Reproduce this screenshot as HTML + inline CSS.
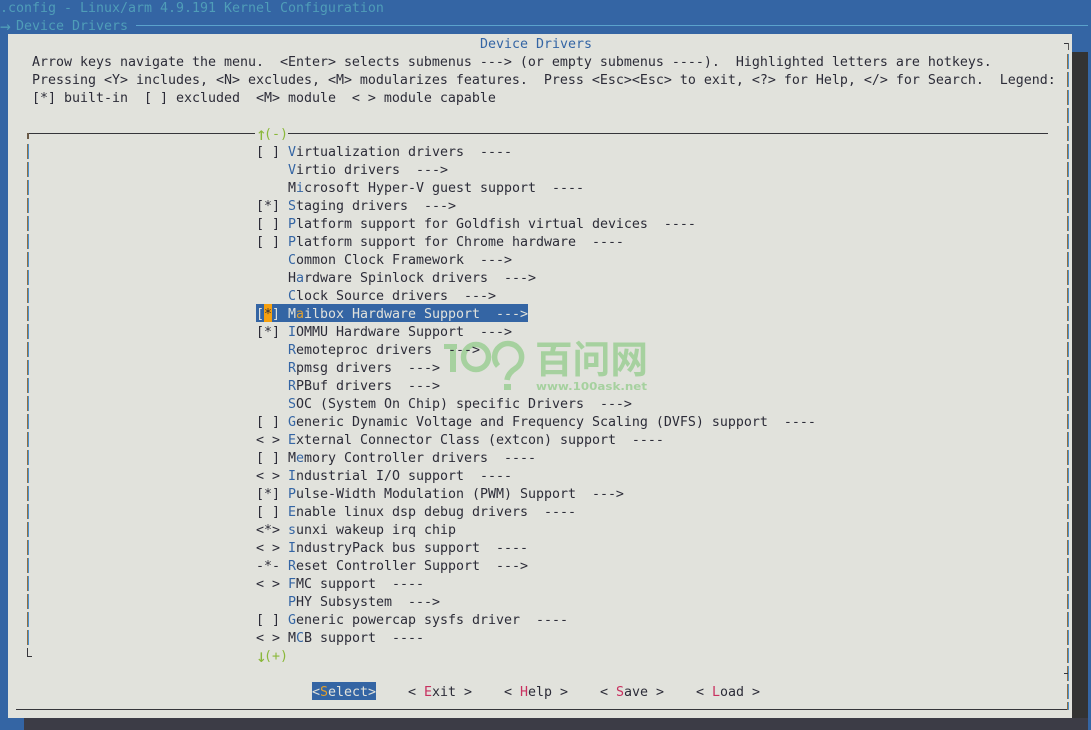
<!DOCTYPE html>
<html><head><meta charset="utf-8"><style>
html,body{margin:0;padding:0;background:#3465a4;width:1091px;height:730px;overflow:hidden}
.a{position:absolute}
.r{position:absolute;white-space:pre;font-family:"DejaVu Sans Mono","Liberation Mono",monospace;font-size:13.3px;letter-spacing:-0.007px;line-height:18px;height:18px;color:#2c2c38;transform:translateY(2px)}
.r i{font-style:normal;color:#3465a4}
.t{color:#4f9db8}
.w{display:inline-block;width:8px;font-size:18px;line-height:18px;text-align:center;vertical-align:top}
.v{position:absolute;width:2px;background:linear-gradient(to right,#8f6f45 50%,#4a90cc 50%);-webkit-mask-image:repeating-linear-gradient(to bottom,#000 0 15px,transparent 15px 18px);mask-image:repeating-linear-gradient(to bottom,#000 0 15px,transparent 15px 18px)}
.h{position:absolute;height:1px;background:#35353a}
.b i{color:#c8305f}
</style></head><body>
<div class="a" style="left:1072px;top:52px;width:16px;height:666px;background:#333"></div>
<div class="a" style="left:24px;top:718px;width:1064px;height:12px;background:#3c3c46"></div>
<div class="a" style="left:8px;top:34px;width:1064px;height:684px;background:#e1e2dc"></div>

<div class="r t" style="left:0;top:-2px">.config - Linux/arm 4.9.191 Kernel Configuration</div>
<div class="r t" style="left:0;top:16px"><span class="w">→</span> Device Drivers</div>
<div class="a" style="left:136px;top:25px;width:952px;height:1px;background:#5aa2cc"></div>

<div class="r" style="left:480px;top:34px;color:#3465a4">Device Drivers</div>
<div class="r" style="left:32px;top:52px">Arrow keys navigate the menu.  &lt;Enter&gt; selects submenus ---&gt; (or empty submenus ----).  Highlighted letters are hotkeys.</div>
<div class="r" style="left:32px;top:70px">Pressing &lt;Y&gt; includes, &lt;N&gt; excludes, &lt;M&gt; modularizes features.  Press &lt;Esc&gt;&lt;Esc&gt; to exit, &lt;?&gt; for Help, &lt;/&gt; for Search.  Legend:</div>
<div class="r" style="left:32px;top:88px">[*] built-in  [ ] excluded  &lt;M&gt; module  &lt; &gt; module capable</div>

<!-- watermark -->
<svg class="a" style="left:440px;top:335px" width="215" height="60" viewBox="0 0 215 60">
<g fill="#a6d19f">
<rect x="4" y="9" width="13" height="5"/><rect x="10" y="9" width="6" height="28"/>
<circle cx="36" cy="22" r="12.5" fill="none" stroke="#a6d19f" stroke-width="5.5"/>
<path d="M58 31 A13.5 13.5 0 1 1 76 33 Q68 38 67 45" fill="none" stroke="#a6d19f" stroke-width="5.5"/>
<rect x="64" y="49" width="7" height="6"/>
<text x="95" y="38" font-family="'Noto Sans CJK SC','WenQuanYi Zen Hei',sans-serif" font-size="38" font-weight="700" textLength="113" lengthAdjust="spacingAndGlyphs">百问网</text>
<text x="96" y="55" font-family="'DejaVu Sans',sans-serif" font-size="11" font-weight="700" textLength="111" lengthAdjust="spacingAndGlyphs">www.100ask.net</text>
</g></svg>

<!-- frame -->
<div class="h" style="left:28px;top:133px;width:227px"></div>
<div class="h" style="left:288px;top:133px;width:760px"></div>
<div class="a" style="left:27px;top:133px;width:2px;height:6px;background:#6a5a48"></div>
<div class="v" style="left:27px;top:144px;height:504px"></div>
<div class="a" style="left:27px;top:648px;width:1px;height:8px;background:#35353a"></div>
<div class="h" style="left:27px;top:656px;width:5px"></div>
<div class="h" style="left:16px;top:709px;width:1053px"></div>
<div class="h" style="left:1064px;top:43px;width:5px"></div>
<div class="a" style="left:1068px;top:43px;width:1px;height:7px;background:#555"></div>
<div class="v" style="left:1067px;top:54px;height:656px"></div>
<div class="h" style="left:1064px;top:673px;width:4px"></div>

<div class="r" style="left:256px;top:124px;color:#8ab83a"><span class="w">↑</span>(-)</div>
<div class="r" style="left:256px;top:646px;color:#8ab83a"><span class="w">↓</span>(+)</div>

<div class="r" style="left:256px;top:142px">[ ] <i>V</i>irtualization drivers  ----</div>
<div class="r" style="left:256px;top:160px">    <i>V</i>irtio drivers  ---&gt;</div>
<div class="r" style="left:256px;top:178px">    M<i>i</i>crosoft Hyper-V guest support  ----</div>
<div class="r" style="left:256px;top:196px">[*] <i>S</i>taging drivers  ---&gt;</div>
<div class="r" style="left:256px;top:214px">[ ] <i>P</i>latform support for Goldfish virtual devices  ----</div>
<div class="r" style="left:256px;top:232px">[ ] <i>P</i>latform support for Chrome hardware  ----</div>
<div class="r" style="left:256px;top:250px">    <i>C</i>ommon Clock Framework  ---&gt;</div>
<div class="r" style="left:256px;top:268px">    H<i>a</i>rdware Spinlock drivers  ---&gt;</div>
<div class="r" style="left:256px;top:286px">    <i>C</i>lock Source drivers  ---&gt;</div>

<div class="a" style="left:256px;top:304px;width:272px;height:18px;background:#3465a4"></div>
<div class="a" style="left:264px;top:304px;width:8px;height:18px;background:#f5a00f"></div>
<div class="r" style="left:256px;top:304px;color:#e1e2dc">[<span style="color:#2c2c38">*</span>] M<span style="color:#e0a030">a</span>ilbox Hardware Support  ---&gt;</div>

<div class="r" style="left:256px;top:322px">[*] <i>I</i>OMMU Hardware Support  ---&gt;</div>
<div class="r" style="left:256px;top:340px">    <i>R</i>emoteproc drivers  ---&gt;</div>
<div class="r" style="left:256px;top:358px">    <i>R</i>pmsg drivers  ---&gt;</div>
<div class="r" style="left:256px;top:376px">    <i>R</i>PBuf drivers  ---&gt;</div>
<div class="r" style="left:256px;top:394px">    <i>S</i>OC (System On Chip) specific Drivers  ---&gt;</div>
<div class="r" style="left:256px;top:412px">[ ] <i>G</i>eneric Dynamic Voltage and Frequency Scaling (DVFS) support  ----</div>
<div class="r" style="left:256px;top:430px">&lt; &gt; <i>E</i>xternal Connector Class (extcon) support  ----</div>
<div class="r" style="left:256px;top:448px">[ ] M<i>e</i>mory Controller drivers  ----</div>
<div class="r" style="left:256px;top:466px">&lt; &gt; <i>I</i>ndustrial I/O support  ----</div>
<div class="r" style="left:256px;top:484px">[*] <i>P</i>ulse-Width Modulation (PWM) Support  ---&gt;</div>
<div class="r" style="left:256px;top:502px">[ ] <i>E</i>nable linux dsp debug drivers  ----</div>
<div class="r" style="left:256px;top:520px">&lt;*&gt; <i>s</i>unxi wakeup irq chip</div>
<div class="r" style="left:256px;top:538px">&lt; &gt; <i>I</i>ndustryPack bus support  ----</div>
<div class="r" style="left:256px;top:556px">-*- <i>R</i>eset Controller Support  ---&gt;</div>
<div class="r" style="left:256px;top:574px">&lt; &gt; <i>F</i>MC support  ----</div>
<div class="r" style="left:256px;top:592px">    <i>P</i>HY Subsystem  ---&gt;</div>
<div class="r" style="left:256px;top:610px">[ ] <i>G</i>eneric powercap sysfs driver  ----</div>
<div class="r" style="left:256px;top:628px">&lt; &gt; M<i>C</i>B support  ----</div>

<div class="a" style="left:312px;top:682px;width:64px;height:18px;background:#3465a4"></div>
<div class="r" style="left:312px;top:682px;color:#e1e2dc">&lt;<span style="color:#e0a030">S</span>elect&gt;</div>
<div class="r b" style="left:408px;top:682px">&lt; <i>E</i>xit &gt;</div>
<div class="r b" style="left:504px;top:682px">&lt; <i>H</i>elp &gt;</div>
<div class="r b" style="left:600px;top:682px">&lt; <i>S</i>ave &gt;</div>
<div class="r b" style="left:696px;top:682px">&lt; <i>L</i>oad &gt;</div>
</body></html>
